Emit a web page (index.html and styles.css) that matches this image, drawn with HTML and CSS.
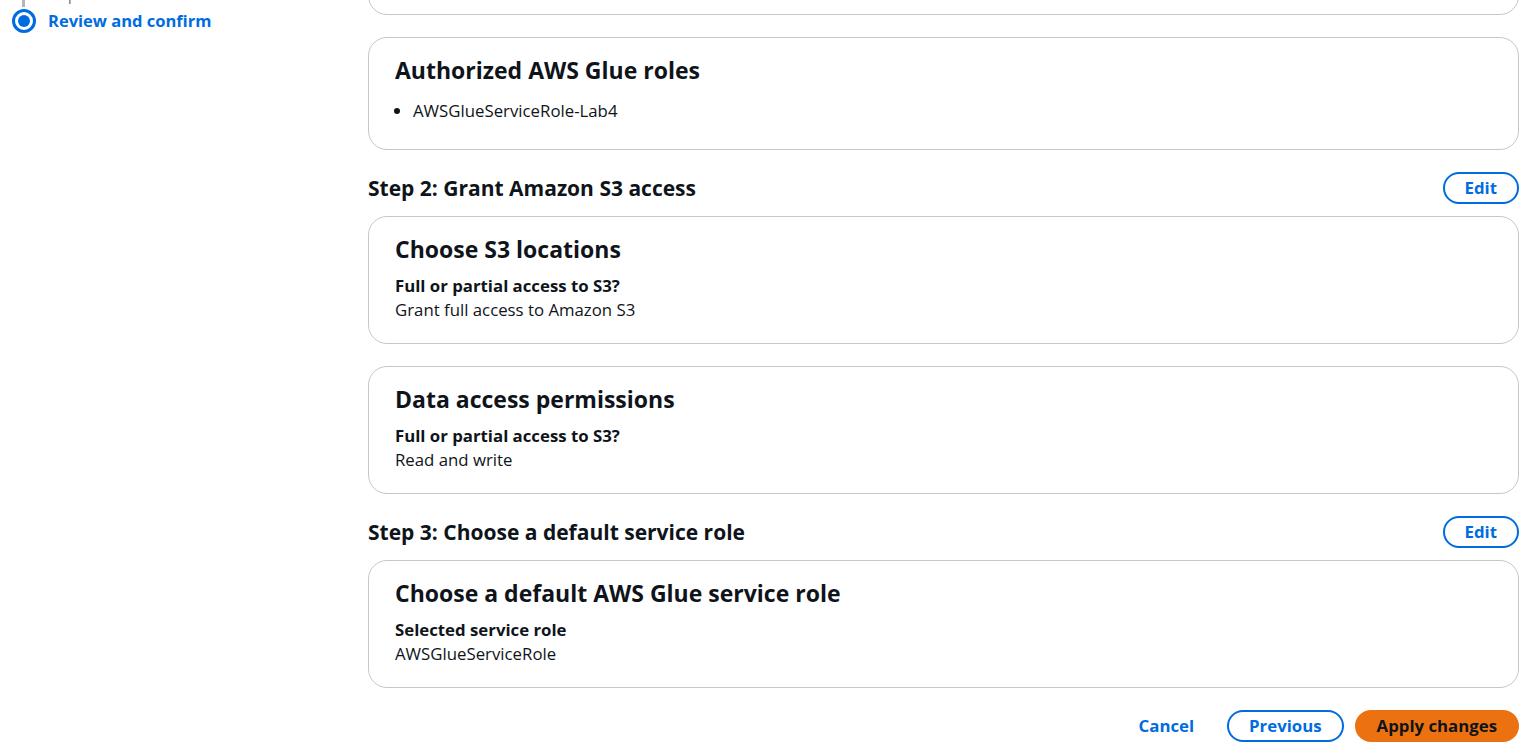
FILE: index.html
```html
<!DOCTYPE html>
<html lang="en">
<head>
<meta charset="utf-8">
<title>Review and confirm</title>
<link rel="stylesheet" href="styles.css">
</head>
<body>
<div class="layout">
  <nav class="wizard-nav">
    <ol class="steps">
      <li class="step current">
        <div class="step-label"><span class="connector"></span><span class="step-num">Step 4</span></div>
        <div class="step-title">
          <span class="dot"><span class="dot-inner"></span></span>
          <span class="step-name">Review and confirm</span>
        </div>
      </li>
    </ol>
  </nav>
  <main class="content">
    <section class="card card-clipped"></section>

    <section class="card">
      <h3 class="card-title">Authorized AWS Glue roles</h3>
      <ul class="role-list">
        <li>AWSGlueServiceRole-Lab4</li>
      </ul>
    </section>

    <div class="step-section">
      <div class="section-header">
        <h2 class="section-title">Step 2: Grant Amazon S3 access</h2>
        <button class="btn btn-normal" type="button">Edit</button>
      </div>
      <section class="card">
        <h3 class="card-title">Choose S3 locations</h3>
        <div class="kv">
          <div class="kv-label">Full or partial access to S3?</div>
          <div class="kv-value">Grant full access to Amazon S3</div>
        </div>
      </section>
    </div>

    <section class="card">
      <h3 class="card-title">Data access permissions</h3>
      <div class="kv">
        <div class="kv-label">Full or partial access to S3?</div>
        <div class="kv-value">Read and write</div>
      </div>
    </section>

    <div class="step-section">
      <div class="section-header">
        <h2 class="section-title">Step 3: Choose a default service role</h2>
        <button class="btn btn-normal" type="button">Edit</button>
      </div>
      <section class="card">
        <h3 class="card-title">Choose a default AWS Glue service role</h3>
        <div class="kv">
          <div class="kv-label">Selected service role</div>
          <div class="kv-value">AWSGlueServiceRole</div>
        </div>
      </section>
    </div>

    <div class="actions">
      <button class="btn btn-link" type="button">Cancel</button>
      <button class="btn btn-normal" type="button">Previous</button>
      <button class="btn btn-primary" type="button">Apply changes</button>
    </div>
  </main>
</div>
</body>
</html>
```

FILE: styles.css
```css
* { box-sizing: border-box; }

html, body {
  margin: 0;
  padding: 0;
  background: #ffffff;
}

body {
  font-family: "Open Sans", "Noto Sans", Arial, sans-serif;
  font-size: 16.8px;
  line-height: 24px;
  color: #0f141a;
  overflow: hidden;
}

.layout {
  display: flex;
  align-items: flex-start;
  padding-right: 11px;
}

/* ---------- wizard navigation ---------- */
.wizard-nav {
  width: 368px;
  flex: none;
  padding-left: 12px;
  margin-top: -15px;
}

.steps {
  list-style: none;
  margin: 0;
  padding: 0;
}

.step-label {
  display: flex;
  align-items: flex-start;
  height: 24px;
}

.connector {
  width: 3px;
  height: 22px;
  background: #b4b4bb;
  margin-left: 10px;
  margin-right: 22px;
  flex: none;
}

.step-num {
  font-size: 14.4px;
  line-height: 20px;
  color: #656871;
}

.step-title {
  display: flex;
  align-items: center;
  gap: 12px;
}

.dot {
  width: 24px;
  height: 24px;
  border-radius: 50%;
  border: 3px solid #006ce0;
  display: flex;
  align-items: center;
  justify-content: center;
  flex: none;
}

.dot-inner {
  width: 12px;
  height: 12px;
  border-radius: 50%;
  background: #006ce0;
}

.step-name {
  font-weight: 700;
  font-size: 16.5px;
  color: #006ce0;
}

/* ---------- main content ---------- */
.content {
  flex: 1;
  display: flex;
  flex-direction: column;
  gap: 22px;
}

.card {
  border: 1px solid #c6c6cd;
  border-radius: 19px;
  padding: 18px 26px 21px;
  background: #ffffff;
}

.card-clipped {
  height: 60px;
  margin-top: -45px;
}

.card-title {
  margin: 0;
  font-size: 23px;
  line-height: 29px;
  font-weight: 700;
  color: #0f141a;
}

.role-list {
  margin: 14px 0 5px;
  padding-left: 18px;
}

.kv {
  margin-top: 10px;
}

.kv-label {
  font-weight: 700;
}

.step-section {
  display: flex;
  flex-direction: column;
  gap: 12px;
}

.section-header {
  display: flex;
  align-items: center;
  justify-content: space-between;
}

.section-title {
  margin: 0;
  font-size: 21px;
  line-height: 26px;
  font-weight: 700;
  color: #0f141a;
}

/* ---------- buttons ---------- */
.btn {
  font-family: inherit;
  font-size: 16.8px;
  line-height: 24px;
  font-weight: 700;
  border-radius: 20px;
  padding: 2px 20px;
  border: 2px solid transparent;
  background: transparent;
  cursor: pointer;
}

.btn-normal {
  border-color: #006ce0;
  color: #006ce0;
  background: #ffffff;
}

.btn-link {
  color: #006ce0;
}

.btn-primary {
  background: #ec7211;
  border-color: #ec7211;
  color: #0f141a;
}

.actions {
  display: flex;
  justify-content: flex-end;
  gap: 11px;
}
```
